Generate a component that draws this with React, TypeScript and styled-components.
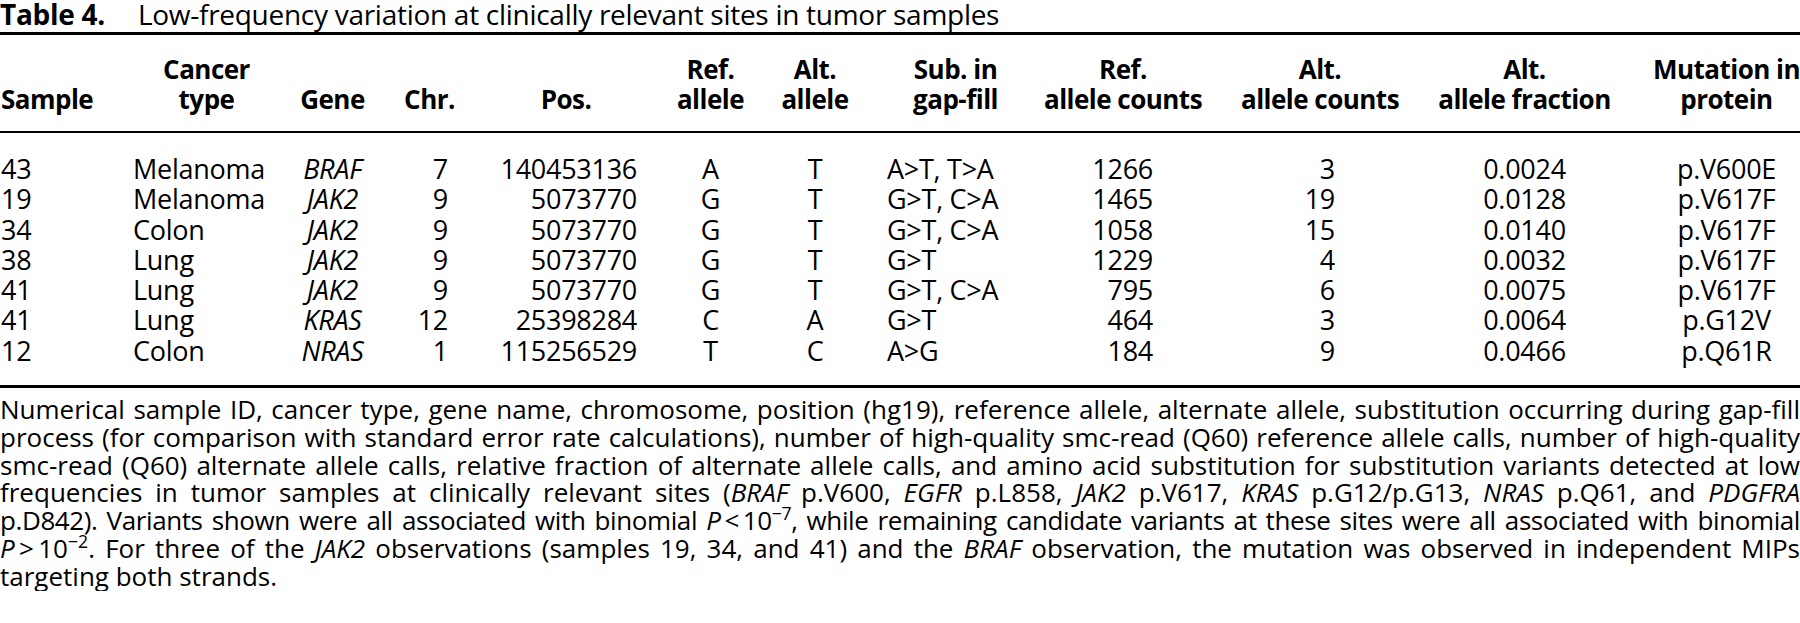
import React from "react";
import styled, { createGlobalStyle } from "styled-components";

const GlobalStyle = createGlobalStyle`
  html, body { margin: 0; padding: 0; background: #ffffff; }
  body { font-family: "Open Sans", "Noto Sans", sans-serif; color: #000000; }
`;

type Align = "left" | "center" | "right";
interface Col {
  w: number;
  head: [string, string];
  hAlign: Align;
  dAlign: Align;
  pl: number;
  pr: number;
  italic?: boolean;
}

const cols: Col[] = [
  { w: 113, head: ["", "Sample"], hAlign: "left", dAlign: "left", pl: 1, pr: 0 },
  { w: 167, head: ["Cancer", "type"], hAlign: "center", dAlign: "left", pl: 20, pr: 0 },
  { w: 105, head: ["", "Gene"], hAlign: "center", dAlign: "center", pl: 0, pr: 0, italic: true },
  { w: 89, head: ["", "Chr."], hAlign: "center", dAlign: "right", pl: 0, pr: 26 },
  { w: 184, head: ["", "Pos."], hAlign: "center", dAlign: "right", pl: 0, pr: 21 },
  { w: 105, head: ["Ref.", "allele"], hAlign: "center", dAlign: "center", pl: 0, pr: 0 },
  { w: 104, head: ["Alt.", "allele"], hAlign: "center", dAlign: "center", pl: 0, pr: 0 },
  { w: 157, head: ["Sub. in", "gap-fill"], hAlign: "center", dAlign: "left", pl: 20, pr: 0 },
  { w: 198, head: ["Ref.", "allele counts"], hAlign: "center", dAlign: "right", pl: 0, pr: 69 },
  { w: 196, head: ["Alt.", "allele counts"], hAlign: "center", dAlign: "right", pl: 0, pr: 83 },
  { w: 213, head: ["Alt.", "allele fraction"], hAlign: "center", dAlign: "center", pl: 0, pr: 0 },
  { w: 169, head: ["Mutation in", "protein"], hAlign: "center", dAlign: "center", pl: 22, pr: 0 },
];

const rows: string[][] = [
  ["43", "Melanoma", "BRAF", "7", "140453136", "A", "T", "A>T, T>A", "1266", "3", "0.0024", "p.V600E"],
  ["19", "Melanoma", "JAK2", "9", "5073770", "G", "T", "G>T, C>A", "1465", "19", "0.0128", "p.V617F"],
  ["34", "Colon", "JAK2", "9", "5073770", "G", "T", "G>T, C>A", "1058", "15", "0.0140", "p.V617F"],
  ["38", "Lung", "JAK2", "9", "5073770", "G", "T", "G>T", "1229", "4", "0.0032", "p.V617F"],
  ["41", "Lung", "JAK2", "9", "5073770", "G", "T", "G>T, C>A", "795", "6", "0.0075", "p.V617F"],
  ["41", "Lung", "KRAS", "12", "25398284", "C", "A", "G>T", "464", "3", "0.0064", "p.G12V"],
  ["12", "Colon", "NRAS", "1", "115256529", "T", "C", "A>G", "184", "9", "0.0466", "p.Q61R"],
];

const colTemplate = cols.map((c) => `${c.w}px`).join(" ");

const Page = styled.div`
  width: 1800px;
  overflow: hidden;
`;

const Title = styled.div`
  font-size: 28px;
  line-height: 26px;
  height: 26px;
  padding-top: 1px;
  margin-bottom: 5px;
  white-space: nowrap;
  letter-spacing: -0.01em;
`;

const TitleLabel = styled.span`
  font-weight: 700;
  margin-right: 33px;
`;

const Table = styled.div`
  border-top: 3px solid #000;
  border-bottom: 3px solid #000;
`;

const HeadRow = styled.div`
  display: grid;
  grid-template-columns: ${colTemplate};
  padding: 19px 0 17px;
  border-bottom: 2px solid #000;
`;

const Body = styled.div`
  display: grid;
  grid-template-columns: ${colTemplate};
  grid-auto-rows: 30.3px;
  padding: 21px 0 19px;
`;

const HeadCell = styled.div<{ $align: Align; $pl: number }>`
  display: flex;
  flex-direction: column;
  align-items: ${(p) => (p.$align === "left" ? "flex-start" : "center")};
  padding-left: ${(p) => p.$pl}px;
  font-size: 26px;
  font-weight: 700;
  line-height: 30px;
  letter-spacing: -0.02em;
  white-space: nowrap;
`;

const HeadLine = styled.span`
  display: block;
  height: 30px;
`;

const Cell = styled.div<{ $align: Align; $pl: number; $pr: number; $italic?: boolean }>`
  text-align: ${(p) => p.$align};
  padding-left: ${(p) => p.$pl}px;
  padding-right: ${(p) => p.$pr}px;
  font-size: 27px;
  line-height: 30.3px;
  font-style: ${(p) => (p.$italic ? "italic" : "normal")};
  white-space: nowrap;
  letter-spacing: -0.01em;
`;

const Caption = styled.div`
  margin-top: 8px;
  font-size: 26px;
  line-height: 27.8px;
`;

const CapLine = styled.div<{ $justify?: boolean; $ls?: number }>`
  text-align: ${(p) => (p.$justify ? "justify" : "left")};
  text-align-last: ${(p) => (p.$justify ? "justify" : "left")};
  letter-spacing: ${(p) => p.$ls ?? 0}px;
  white-space: nowrap;
`;

const I = styled.i`
  font-style: italic;
`;

const Sup = styled.sup`
  font-size: 0.68em;
  line-height: 0;
  vertical-align: 0.55em;
`;

export default function App() {
  return (
    <Page>
      <GlobalStyle />
      <Title>
        <TitleLabel>Table 4.</TitleLabel>
        Low-frequency variation at clinically relevant sites in tumor samples
      </Title>
      <Table>
        <HeadRow>
          {cols.map((c, i) => (
            <HeadCell key={i} $align={c.hAlign} $pl={c.pl}>
              <HeadLine>{c.head[0]}</HeadLine>
              <HeadLine>{c.head[1]}</HeadLine>
            </HeadCell>
          ))}
        </HeadRow>
        <Body>
          {rows.map((r, ri) =>
            r.map((v, ci) => {
              const c = cols[ci];
              return (
                <Cell key={`${ri}-${ci}`} $align={c.dAlign} $pl={c.pl} $pr={c.pr} $italic={c.italic}>
                  {v}
                </Cell>
              );
            })
          )}
        </Body>
      </Table>
      <Caption>
        <CapLine $justify>
          Numerical sample ID, cancer type, gene name, chromosome, position (hg19), reference allele, alternate allele, substitution occurring during gap-fill
        </CapLine>
        <CapLine $justify>
          process (for comparison with standard error rate calculations), number of high-quality smc-read (Q60) reference allele calls, number of high-quality
        </CapLine>
        <CapLine $justify>
          smc-read (Q60) alternate allele calls, relative fraction of alternate allele calls, and amino acid substitution for substitution variants detected at low
        </CapLine>
        <CapLine $justify>
          frequencies in tumor samples at clinically relevant sites (<I>BRAF</I> p.V600, <I>EGFR</I> p.L858, <I>JAK2</I> p.V617, <I>KRAS</I> p.G12/p.G13, <I>NRAS</I> p.Q61, and <I>PDGFRA</I>
        </CapLine>
        <CapLine $justify $ls={-0.4}>
          p.D842). Variants shown were all associated with binomial <I>P</I>{"\u2009<\u2009"}10<Sup>−7</Sup>, while remaining candidate variants at these sites were all associated with binomial
        </CapLine>
        <CapLine $justify>
          <I>P</I>{"\u2009>\u2009"}10<Sup>−2</Sup>. For three of the <I>JAK2</I> observations (samples 19, 34, and 41) and the <I>BRAF</I> observation, the mutation was observed in independent MIPs
        </CapLine>
        <CapLine>targeting both strands.</CapLine>
      </Caption>
    </Page>
  );
}
